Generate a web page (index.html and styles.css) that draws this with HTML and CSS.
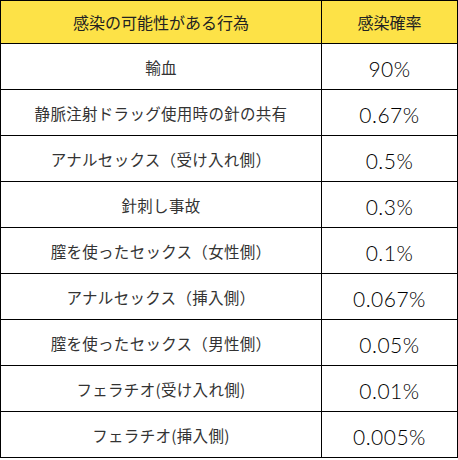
FILE: index.html
```html
<!DOCTYPE html>
<html lang="ja">
<head>
<meta charset="utf-8">
<link rel="stylesheet" href="styles.css">
</head>
<body>
<table class="risk">
  <thead>
    <tr class="head">
      <th class="act">感染の可能性がある行為</th>
      <th class="rate">感染確率</th>
    </tr>
  </thead>
  <tbody>
    <tr><td class="act">輸血</td><td class="rate num">90%</td></tr>
    <tr><td class="act">静脈注射ドラッグ使用時の針の共有</td><td class="rate num">0.67%</td></tr>
    <tr><td class="act">アナルセックス（受け入れ側）</td><td class="rate num">0.5%</td></tr>
    <tr><td class="act">針刺し事故</td><td class="rate num">0.3%</td></tr>
    <tr><td class="act">膣を使ったセックス（女性側）</td><td class="rate num">0.1%</td></tr>
    <tr><td class="act">アナルセックス（挿入側）</td><td class="rate num">0.067%</td></tr>
    <tr><td class="act">膣を使ったセックス（男性側）</td><td class="rate num">0.05%</td></tr>
    <tr><td class="act">フェラチオ(受け入れ側)</td><td class="rate num">0.01%</td></tr>
    <tr><td class="act">フェラチオ(挿入側)</td><td class="rate num">0.005%</td></tr>
  </tbody>
</table>
</body>
</html>
```
FILE: styles.css
```css
html, body {
  margin: 0;
  padding: 0;
  background: #fff;
}
.risk {
  border-collapse: collapse;
  width: 458px;
  table-layout: fixed;
  font-family: "Noto Sans CJK JP", "Noto Sans", sans-serif;
  color: #333;
}
.risk th, .risk td {
  border: 1px solid #000;
  padding: 0;
  text-align: center;
  vertical-align: middle;
}
.risk th {
  background: #fde247;
  font-weight: normal;
  font-size: 16px;
  color: #222;
}
.head { height: 43px; }
.risk tbody tr { height: 46px; }
.act { width: 320px; }
.risk td.act { font-size: 15.5px; letter-spacing: 0.3px; color: #333; }
.num {
  font-family: "Lato", "Liberation Sans", sans-serif;
  font-weight: 300;
  font-size: 21px;
  letter-spacing: 0.5px;
  color: #000;
}
.risk td.num { padding-top: 3px; }
```
